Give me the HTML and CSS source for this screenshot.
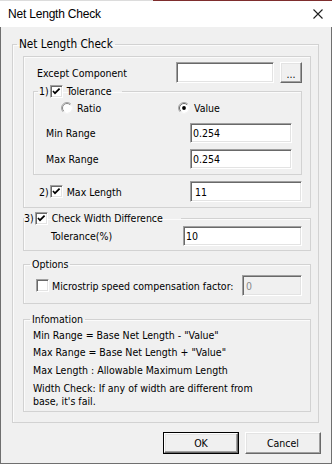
FILE: index.html
```html
<!DOCTYPE html>
<html>
<head>
<meta charset="utf-8">
<link rel="stylesheet" href="styles.css">
</head>
<body>
<div class="window">
  <div class="titlebar">
    <span class="title">Net Length Check</span>
    <svg class="close" width="10" height="10" viewBox="0 0 10 10"><path d="M0.5 0.5 L9.5 9.5 M9.5 0.5 L0.5 9.5" stroke="#1e1e1e" stroke-width="1.1" fill="none"/></svg>
  </div>
  <div class="dialog">
    <fieldset class="grp outer">
      <legend class="lg lg-outer">Net Length Check</legend>
      <div class="box1">
        <div class="row-except">
          <span class="lbl lbl-except">Except Component</span>
          <span class="edit edit-except"></span>
          <span class="btn3d btn-dots">...</span>
        </div>
        <fieldset class="grp tol">
          <legend class="lg lg-chk lg-tol"><span class="num">1)</span><span class="cb"><svg width="11" height="11" viewBox="0 0 11 11"><path d="M2 5 L4 7.2 L8.6 2.6" stroke="#000" stroke-width="1.7" fill="none"/></svg></span><span class="cbtext">Tolerance</span></legend>
          <div class="radios">
            <span class="radio radio-first"><svg class="rb" width="12" height="12" viewBox="0 0 12 12"><circle cx="6" cy="6" r="5" fill="#fff"/><path d="M2.1 9.9 A5.5 5.5 0 0 1 9.9 2.1" stroke="#a8a8a8" fill="none"/><path d="M9.9 2.1 A5.5 5.5 0 0 1 2.1 9.9" stroke="#f4f4f4" fill="none"/><path d="M2.8 9.2 A4.5 4.5 0 0 1 9.2 2.8" stroke="#8a8a8a" fill="none"/></svg>Ratio</span>
            <span class="radio"><svg class="rb" width="12" height="12" viewBox="0 0 12 12"><circle cx="6" cy="6" r="5" fill="#fff"/><path d="M2.1 9.9 A5.5 5.5 0 0 1 9.9 2.1" stroke="#a8a8a8" fill="none"/><path d="M9.9 2.1 A5.5 5.5 0 0 1 2.1 9.9" stroke="#f4f4f4" fill="none"/><path d="M2.8 9.2 A4.5 4.5 0 0 1 9.2 2.8" stroke="#6a6a6a" fill="none"/><circle cx="6" cy="6" r="1.9" fill="#000"/></svg>Value</span>
          </div>
          <div class="field field-first"><span class="lbl">Min Range</span><span class="edit edit-range">0.254</span></div>
          <div class="field field-second"><span class="lbl">Max Range</span><span class="edit edit-range">0.254</span></div>
        </fieldset>
        <div class="row-maxlen">
          <span class="chkctl"><span class="num">2)</span><span class="cb"><svg width="11" height="11" viewBox="0 0 11 11"><path d="M2 5 L4 7.2 L8.6 2.6" stroke="#000" stroke-width="1.7" fill="none"/></svg></span><span class="cbtext">Max Length</span></span>
          <span class="edit edit-maxlen">11</span>
        </div>
      </div>
      <fieldset class="grp cwd">
        <legend class="lg lg-chk lg-cwd"><span class="num">3)</span><span class="cb"><svg width="11" height="11" viewBox="0 0 11 11"><path d="M2 5 L4 7.2 L8.6 2.6" stroke="#000" stroke-width="1.7" fill="none"/></svg></span><span class="cbtext">Check Width Difference</span></legend>
        <div class="field"><span class="lbl">Tolerance(%)</span><span class="edit edit-cwd">10</span></div>
      </fieldset>
      <fieldset class="grp opts">
        <legend class="lg lg-opts">Options</legend>
        <div class="row-opt">
          <span class="cb cb-empty"></span><span class="opt-text">Microstrip speed compensation factor:</span>
          <span class="edit edit-disabled">0</span>
        </div>
      </fieldset>
      <fieldset class="grp info">
        <legend class="lg lg-info">Infomation</legend>
        <div class="line line-1">Min Range = Base Net Length - "Value"</div>
        <div class="line">Max Range = Base Net Length + "Value"</div>
        <div class="line line-3">Max Length : Allowable Maximum Length</div>
        <div class="line line-4">Width Check: If any of width are different from<br>base, it's fail.</div>
      </fieldset>
    </fieldset>
    <div class="buttons">
      <span class="btn3d btn-ok"><span>OK</span></span>
      <span class="btn3d btn-cancel">Cancel</span>
    </div>
  </div>
</div>
</body>
</html>
```

FILE: styles.css
```css
* { box-sizing: border-box; }
html, body { margin: 0; padding: 0; }
body {
  width: 332px;
  height: 464px;
  overflow: hidden;
  background: #f0f0f0;
  font-family: "DejaVu Sans Condensed", "DejaVu Sans", sans-serif;
  font-size: 10.5px;
  color: #000;
}
.window {
  width: 332px;
  height: 464px;
  display: flex;
  flex-direction: column;
}
.titlebar {
  height: 27px;
  flex: none;
  display: flex;
  align-items: center;
  padding: 1px 9px 0 8px;
  background: linear-gradient(to right, #dcdcdc 0 153px, #7e2d2d 153px) top left / 100% 1px no-repeat, #fff;
}
.title {
  flex: 1;
  font-family: "Liberation Sans", sans-serif;
  font-size: 12px;
  letter-spacing: -0.2px;
}
.close { display: block; }
.dialog {
  flex: 1;
  border: 1px solid #6f6f6f;
  border-top: 0;
  padding: 11px 10px 0 11px;
  display: flex;
  flex-direction: column;
}
.grp {
  margin: 0;
  min-width: 0;
  border: 1px solid #d2d2d2;
  box-shadow: inset 1px 1px 0 #fbfbfb;
}
.lg {
  line-height: 13px;
  height: 13px;
  padding: 0 2px;
  white-space: nowrap;
}
.outer {
  width: 307px;
  padding: 5px 7px 10px 10px;
}
.lg-outer { margin-left: -6px; font-size: 11.7px; }
.box1 {
  border: 1px solid #d2d2d2;
  box-shadow: inset 1px 1px 0 #fbfbfb;
  padding: 5px 8px 5px 0;
}
.row-except {
  display: flex;
  align-items: center;
  height: 21px;
}
.lbl-except { margin-left: 13px; width: 139px; }
.edit {
  display: flex;
  align-items: center;
  height: 20px;
  padding-left: 2px;
  background: #fff;
  border: 1px solid;
  border-color: #a0a0a0 #ffffff #ffffff #a0a0a0;
  box-shadow: inset 1px 1px 0 #696969, inset -1px -1px 0 #e3e3e3;
  white-space: nowrap;
}
.edit-except { width: 98px; height: 21px; }
.btn3d {
  display: flex;
  align-items: center;
  justify-content: center;
  background: #f0f0f0;
  border: 1px solid;
  border-color: #ffffff #696969 #696969 #ffffff;
  box-shadow: inset -1px -1px 0 #a0a0a0, inset 1px 1px 0 #e3e3e3;
}
.btn-dots {
  width: 22px;
  height: 21px;
  margin-left: 6px;
  align-items: flex-end;
  padding-bottom: 3px;
  line-height: 10px;
}
.tol {
  margin: 2px 0 0 9px;
  padding: 3px 9px 5px 12px;
}
.lg-chk {
  display: flex;
  align-items: center;
  padding: 0;
}
.lg-tol { margin-left: -8px; padding-left: 1px; padding-right: 10px; }
.num { margin-right: 1px; }
.cb {
  display: inline-flex;
  align-items: center;
  justify-content: center;
  width: 13px;
  height: 13px;
  flex: none;
  background: #fff;
  border: 1px solid;
  border-color: #a0a0a0 #ffffff #ffffff #a0a0a0;
  box-shadow: inset 1px 1px 0 #696969, inset -1px -1px 0 #e3e3e3;
}
.cb svg { display: block; }
.cbtext { margin-left: 4px; }
.radios {
  display: flex;
  align-items: center;
  height: 14px;
  padding-left: 15px;
}
.radio {
  display: flex;
  align-items: center;
}
.radio-first { width: 117px; }
.rb { display: block; margin-right: 4px; flex: none; }
.field {
  display: flex;
  align-items: center;
  justify-content: space-between;
  height: 20px;
}
.field-first { margin-top: 8px; }
.field-second { margin-top: 6px; }
.edit-range { width: 102px; }
.row-maxlen {
  display: flex;
  align-items: center;
  justify-content: space-between;
  height: 21px;
  margin-top: 6px;
  padding-left: 15px;
}
.chkctl { display: flex; align-items: center; }
.edit-maxlen { width: 112px; height: 21px; padding-left: 4px; }
.cwd {
  margin-top: 4px;
  padding: 1px 8px 4px 27px;
}
.lg-cwd { margin-left: -27px; padding-right: 18px; }
.edit-cwd { width: 119px; }
.opts {
  margin-top: 7px;
  padding: 4px 8px 7px 12px;
}
.lg-opts { margin-left: -6px; }
.row-opt {
  display: flex;
  align-items: center;
  height: 21px;
}
.cb-empty { margin-right: 3px; }
.opt-text { flex: 1; }
.edit-disabled {
  width: 60px;
  height: 21px;
  background: #f0f0f0;
  color: #8a8a8a;
  padding-left: 3px;
}
.info {
  margin-top: 9px;
  padding: 3px 8px 3px 9px;
}
.lg-info { margin-left: -3px; }
.line { line-height: 13px; margin-top: 4px; white-space: nowrap; }
.line-1 { margin-top: 0; }
.line-3, .line-4 { margin-top: 5px; }
.buttons {
  display: flex;
  justify-content: flex-end;
  gap: 6px;
  margin-top: 9px;
}
.buttons .btn3d {
  width: 76px;
  height: 22px;
}
.btn-ok {
  border: 1px solid #000;
  box-shadow: none;
  padding: 0;
}
.btn-ok span {
  display: flex;
  align-items: center;
  justify-content: center;
  width: 100%;
  height: 100%;
  border: 1px solid;
  border-color: #ffffff #696969 #696969 #ffffff;
  box-shadow: inset -1px -1px 0 #a0a0a0, inset 1px 1px 0 #e3e3e3;
}
```
